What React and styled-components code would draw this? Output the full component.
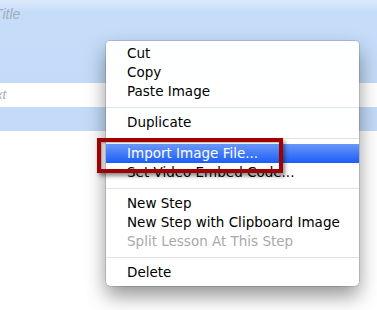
import React from 'react';
import styled, { createGlobalStyle } from 'styled-components';

const GlobalStyle = createGlobalStyle`
  html, body {
    margin: 0;
    padding: 0;
    background: #fff;
    overflow: hidden;
  }
`;

const items = [
  { label: 'Cut' },
  { label: 'Copy' },
  { label: 'Paste Image' },
  { sep: true },
  { label: 'Duplicate' },
  { sep: true },
  { label: 'Import Image File...', active: true },
  { label: 'Set Video Embed Code...' },
  { sep: true },
  { label: 'New Step' },
  { label: 'New Step with Clipboard Image' },
  { label: 'Split Lesson At This Step', disabled: true },
  { sep: true },
  { label: 'Delete' },
];

const App = () => {
  return (
    <>
      <GlobalStyle />
      <StPage>
        <StTitleRow>
          <StPlaceholder $size={14}>Title</StPlaceholder>
        </StTitleRow>
        <StTextRow>
          <StPlaceholder $size={13} $shift={-18}>Text</StPlaceholder>
        </StTextRow>
        <StBlueRow />

        <StMenu>
          {items.map((item, i) =>
            item.sep ? (
              <StSeparator key={i} />
            ) : (
              <StItem key={i} $active={item.active} $disabled={item.disabled}>
                {item.label}
              </StItem>
            )
          )}
        </StMenu>
        <StCallout />
      </StPage>
    </>
  );
};

export default App;

const StPage = styled.div`
  position: relative;
  width: 377px;
  height: 310px;
  overflow: hidden;
  background: #fff;
  display: flex;
  flex-direction: column;
`;

const StTitleRow = styled.div`
  height: 83px;
  background: linear-gradient(to bottom, #dde9fb 0px, #c5ddf9 12px, #c3dbf9 100%);
  padding-top: 6px;
  box-sizing: border-box;
`;

const StTextRow = styled.div`
  height: 24px;
  background: #fff;
  display: flex;
  align-items: center;
`;

const StBlueRow = styled.div`
  height: 24px;
  background: #c3dbf9;
`;

const StPlaceholder = styled.div`
  font-family: 'Liberation Sans', Arial, sans-serif;
  font-style: italic;
  font-size: ${p => p.$size}px;
  color: #a3adbb;
  margin-left: ${p => p.$shift ?? -6}px;
  line-height: 16px;
`;

const StMenu = styled.div`
  position: absolute;
  left: 106px;
  top: 41px;
  width: 253px;
  box-sizing: border-box;
  padding: 3px 0 4px;
  background: rgba(255, 255, 255, 0.98);
  border-radius: 4px 4px 5px 5px;
  box-shadow: 0 0 0 1px rgba(0, 0, 0, 0.12), 0 10px 20px rgba(0, 0, 0, 0.42);
  font-family: 'DejaVu Sans', 'Lucida Grande', sans-serif;
  font-size: 13.5px;
`;

const StItem = styled.div`
  height: 19px;
  line-height: 19px;
  padding-left: 21px;
  white-space: nowrap;
  color: ${p => (p.$active ? '#fff' : p.$disabled ? '#a9a9a9' : '#000')};
  background: ${p => (p.$active ? 'linear-gradient(to bottom, #6a97f9, #1b5ef7)' : 'transparent')};
`;

const StSeparator = styled.div`
  height: 12px;
  display: flex;
  align-items: center;

  &::after {
    content: '';
    flex: 1;
    height: 1px;
    background: #e2e2e2;
  }
`;

const StCallout = styled.div`
  position: absolute;
  left: 97px;
  top: 138px;
  width: 186px;
  height: 35px;
  box-sizing: border-box;
  border: 4px solid #a10000;
  box-shadow: 2px 3px 4px rgba(0, 0, 0, 0.45), inset 1px 1px 2px rgba(0, 0, 0, 0.3);
`;
